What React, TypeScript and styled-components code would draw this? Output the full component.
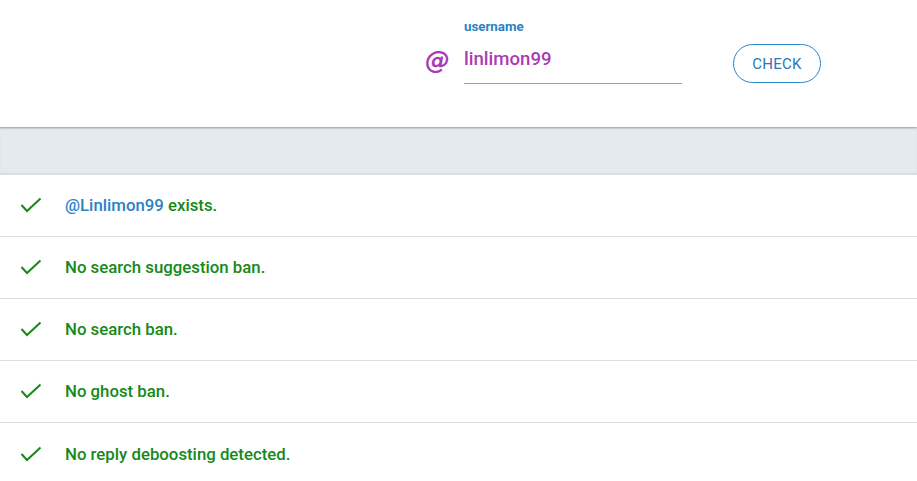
import React from 'react';
import styled, { createGlobalStyle } from 'styled-components';

const GlobalStyle = createGlobalStyle`
  html, body {
    margin: 0;
    padding: 0;
    background: #ffffff;
    font-family: Roboto, 'Liberation Sans', sans-serif;
  }
`;

const Header = styled.header`
  height: 127px;
  background: #ffffff;
  display: flex;
  align-items: flex-start;
  padding-left: 425px;
  box-sizing: border-box;
  position: relative;
  z-index: 1;
  box-shadow: 0 1px 2px rgba(0, 0, 0, 0.35);
`;

const Field = styled.div`
  display: flex;
  align-items: flex-end;
  padding-top: 19px;
`;

const AtSign = styled.span`
  color: #a93bb5;
  font-family: 'DejaVu Sans', Verdana, sans-serif;
  font-size: 25px;
  font-style: italic;
  font-weight: 700;
  width: 39px;
  line-height: 1;
  padding-bottom: 11px;
`;

const InputWrap = styled.div`
  display: flex;
  flex-direction: column;
  width: 218px;
`;

const Label = styled.label`
  color: #2b82c4;
  font-size: 13.3px;
  font-weight: 700;
  line-height: 16px;
`;

const Input = styled.input`
  border: none;
  border-bottom: 1px solid #9e9e9e;
  outline: none;
  padding: 13px 0 13px;
  margin: 0;
  font-family: Roboto, 'Liberation Sans', sans-serif;
  font-size: 18.6px;
  line-height: 22px;
  font-weight: 500;
  color: #a93bb5;
  background: transparent;
`;

const CheckButton = styled.button`
  margin-left: 51px;
  margin-bottom: 1px;
  width: 88px;
  height: 39px;
  border: 1px solid #2a87c8;
  border-radius: 20px;
  background: #ffffff;
  color: #2a78b8;
  font-family: Roboto, 'Liberation Sans', sans-serif;
  font-size: 15px;
  letter-spacing: 0.3px;
  text-transform: uppercase;
  cursor: pointer;
`;

const Band = styled.div`
  height: 48px;
  background: #e5eaee;
  box-shadow: inset 0 -2px 2px rgba(0, 0, 0, 0.06);
`;

const List = styled.ul`
  list-style: none;
  margin: 0;
  padding: 0;
`;

const Row = styled.li`
  display: flex;
  align-items: center;
  padding-left: 20px;
  padding-bottom: 1px;
  box-sizing: border-box;
  height: 62px;
  border-bottom: 1px solid #dddddd;

  &:last-child {
    border-bottom: none;
  }
`;

const Icon = styled.svg`
  width: 22px;
  height: 16px;
  margin-right: 23px;
  flex-shrink: 0;
`;

const Message = styled.span`
  color: #15891a;
  font-size: 16.8px;
  font-weight: 500;
`;

const Handle = styled.span`
  color: #2b82c4;
`;

const Check = () => (
  <Icon viewBox="0 0 22 16">
    <polyline points="1.5,8 7,14 20.5,1.5" fill="none" stroke="#15891a" strokeWidth="2" />
  </Icon>
);

const results: React.ReactNode[] = [
  <>
    <Handle>@Linlimon99</Handle> exists.
  </>,
  'No search suggestion ban.',
  'No search ban.',
  'No ghost ban.',
  'No reply deboosting detected.',
];

export default function App() {
  return (
    <>
      <GlobalStyle />
      <Header>
        <Field>
          <AtSign>@</AtSign>
          <InputWrap>
            <Label htmlFor="username">username</Label>
            <Input id="username" defaultValue="linlimon99" />
          </InputWrap>
          <CheckButton>Check</CheckButton>
        </Field>
      </Header>
      <Band />
      <List>
        {results.map((r, i) => (
          <Row key={i}>
            <Check />
            <Message>{r}</Message>
          </Row>
        ))}
      </List>
    </>
  );
}
